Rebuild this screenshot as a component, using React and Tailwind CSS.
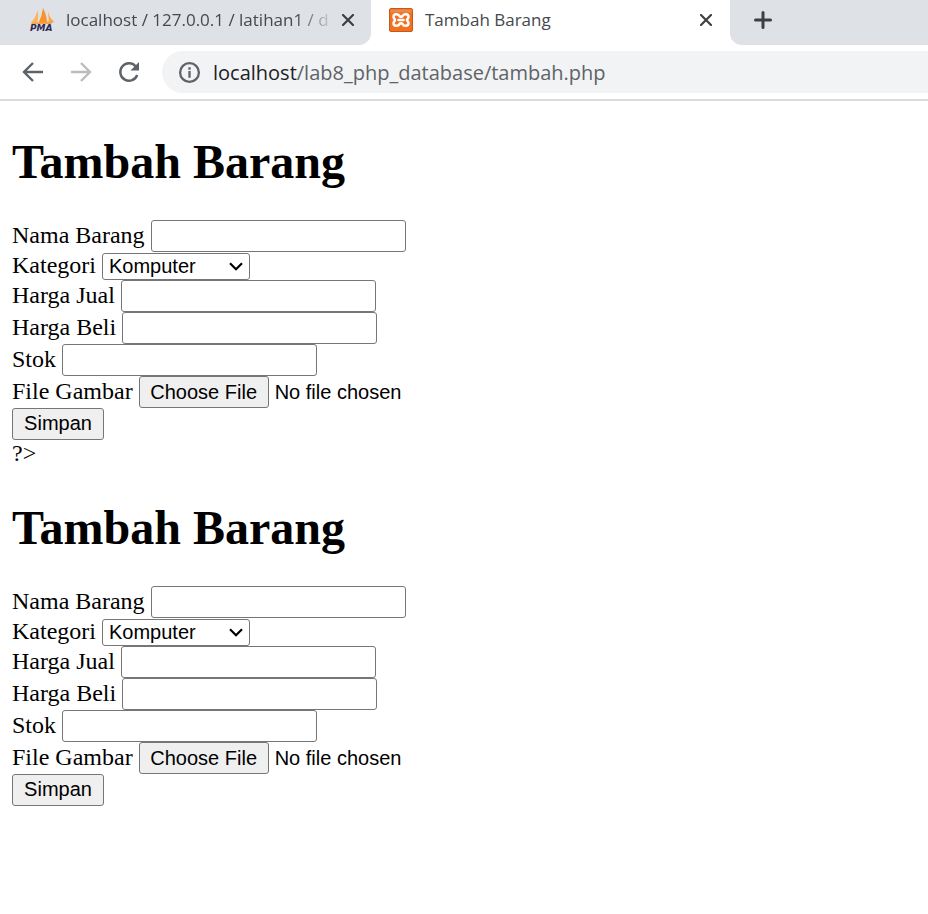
import React from "react";

function PmaIcon() {
  return (
    <svg viewBox="0 0 26 26" className="h-[26px] w-[26px] shrink-0" aria-hidden="true">
      <path d="M9 3 Q9.500 10 8.500 16 L2 16 Q7 10 9 3Z" fill="#fbb35c" />
      <path d="M14 1 Q18 9 18 16 L9.500 16 Q13 9 14 1Z" fill="#f9922a" />
      <path d="M19 4 Q20 10 25 15 L20 16 Q19.500 10 19 4Z" fill="#fba84a" />
      <path d="M3 16 L25 14 L22 17 L2 17Z" fill="#f6a245" />
      <text x="1" y="24" className="fill-[#2c2a55] font-['DejaVu_Sans',sans-serif] text-[9px] font-bold italic">
        PMA
      </text>
    </svg>
  );
}

function XamppIcon() {
  return (
    <svg viewBox="0 0 24 24" className="h-6 w-6 shrink-0" aria-hidden="true">
      <rect x="0.500" y="0.500" width="23" height="23" rx="1.500" fill="#f37021" stroke="#c4591a" />
      <rect x="1.500" y="1.500" width="21" height="3" fill="#e98a4b" />
      <path
        d="M10.500 8 C9.500 5.500 4.500 5.300 4.500 8.700 C4.500 10.500 6 11 6 12 C6 13 4.500 13.500 4.500 15.300 C4.500 18.700 9.500 18.500 10.500 16 M13.500 8 C14.500 5.500 19.500 5.300 19.500 8.700 C19.500 10.500 18 11 18 12 C18 13 19.500 13.500 19.500 15.300 C19.500 18.700 14.500 18.500 13.500 16 M10.500 8 Q12 9.500 13.500 8 M10.500 16 Q12 14.500 13.500 16 M9.500 12 H14.500"
        fill="none"
        stroke="#fff"
        strokeWidth="2.500"
        strokeLinecap="round"
        strokeLinejoin="round"
      />
    </svg>
  );
}

function CloseButton({ label }) {
  return (
    <button type="button" aria-label={label} className="flex h-6 w-6 shrink-0 items-center justify-center text-[#3c4043]">
      <svg viewBox="0 0 12 12" className="h-3 w-3" fill="none" stroke="currentColor" strokeWidth="2.200" strokeLinecap="round">
        <path d="M1 1 L11 11 M11 1 L1 11" />
      </svg>
    </button>
  );
}

function TabStrip() {
  return (
    <div className="flex h-[45px] bg-white font-['Open_Sans','Noto_Sans',sans-serif] text-[17px] leading-6 text-[#45494d]">
      <div className="flex w-[371px] shrink-0 items-center rounded-br-xl bg-[#dee1e6] pr-[11px] pb-[5px] pl-[29px]">
        <PmaIcon />
        <span className="ml-[11px] grow whitespace-nowrap [mask-image:linear-gradient(to_right,black_85%,transparent)]">
          localhost / 127.0.0.1 / latihan1 / d
        </span>
        <CloseButton label="Close phpMyAdmin tab" />
      </div>
      <div className="flex w-[359px] shrink-0 items-center pr-3 pb-[5px] pl-[18px]">
        <XamppIcon />
        <span className="ml-3 grow">Tambah Barang</span>
        <CloseButton label="Close Tambah Barang tab" />
      </div>
      <div className="flex grow items-center rounded-bl-xl bg-[#dee1e6] pb-[5px] pl-[21px]">
        <button type="button" aria-label="New tab" className="flex h-6 w-6 items-center justify-center text-[#3c4043]">
          <svg viewBox="0 0 18 18" className="h-[18px] w-[18px]" fill="none" stroke="currentColor" strokeWidth="3" strokeLinecap="round">
            <path d="M9 1.500 V16.500 M1.500 9 H16.500" />
          </svg>
        </button>
      </div>
    </div>
  );
}

function Toolbar() {
  return (
    <div className="flex h-14 items-center border-b-2 border-[#dadcdb] pl-[21px]">
      <div className="flex gap-6 text-[#5f6368]">
        <button type="button" aria-label="Back">
          <svg viewBox="0 0 24 24" className="h-6 w-6" fill="none" stroke="currentColor" strokeWidth="2.400">
            <path d="M22 12 H3.500 M12 3 L3 12 L12 21" />
          </svg>
        </button>
        <button type="button" aria-label="Forward" className="text-[#babcbe]">
          <svg viewBox="0 0 24 24" className="h-6 w-6" fill="none" stroke="currentColor" strokeWidth="2.400">
            <path d="M2 12 H20.500 M12 3 L21 12 L12 21" />
          </svg>
        </button>
        <button type="button" aria-label="Reload">
          <svg viewBox="0 0 24 24" className="h-6 w-6" fill="none" stroke="currentColor" strokeWidth="2.400">
            <path d="M20.200 15 A8.700 8.700 0 1 1 18.500 6.200" />
            <path d="M22 2 V10.500 H13.500 Z" fill="currentColor" stroke="none" />
          </svg>
        </button>
      </div>
      <div className="ml-[21px] flex h-[42px] grow items-center gap-3 rounded-l-full bg-[#f1f3f4] pl-4">
        <svg viewBox="0 0 24 24" className="h-[23px] w-[23px] shrink-0 text-[#5f6368]" fill="none" stroke="currentColor" strokeWidth="2.400" aria-hidden="true">
          <circle cx="12" cy="12" r="9.800" />
          <path d="M12 10.500 V17.500 M12 6.500 V9" />
        </svg>
        <span className="pt-0.5 font-['Open_Sans','Noto_Sans',sans-serif] text-[20px] leading-7 whitespace-nowrap text-[#5f6368]">
          <span className="text-[#202124]">localhost</span>/lab8_php_database/tambah.php
        </span>
      </div>
    </div>
  );
}

function TextField({ id, label }) {
  return (
    <div className="flex items-start gap-[6px]">
      <label htmlFor={id}>{label}</label>
      <input
        id={id}
        type="text"
        className="h-8 w-[255px] rounded-[3px] border border-[#767676] bg-white px-1 font-['Liberation_Sans',Arial,sans-serif] text-[20px]"
      />
    </div>
  );
}

function ItemForm({ prefix }) {
  return (
    <section>
      <h1 className="mb-[30px] pt-[33px] text-[48px] leading-[56px] font-bold">Tambah Barang</h1>
      <form className="leading-[30px]" onSubmit={(e) => e.preventDefault()}>
        <TextField id={`${prefix}-nama`} label="Nama Barang" />
        <div className="flex h-7 items-start gap-[6px] leading-[26px]">
          <label htmlFor={`${prefix}-kategori`}>Kategori</label>
          <div className="relative mt-px">
            <select
              id={`${prefix}-kategori`}
              className="block h-[27px] w-[148px] appearance-none rounded-[3px] border border-[#767676] bg-white pb-0.5 pl-[6px] font-['Liberation_Sans',Arial,sans-serif] text-[20px] leading-6"
            >
              <option>Komputer</option>
              <option>Elektronik</option>
              <option>Hand Phone</option>
            </select>
            <svg viewBox="0 0 14 9" className="pointer-events-none absolute top-[9px] right-[7px] h-[9px] w-[14px]" fill="none" stroke="black" strokeWidth="2.200" aria-hidden="true">
              <path d="M1 1.200 L7 7.200 L13 1.200" />
            </svg>
          </div>
        </div>
        <TextField id={`${prefix}-jual`} label="Harga Jual" />
        <TextField id={`${prefix}-beli`} label="Harga Beli" />
        <TextField id={`${prefix}-stok`} label="Stok" />
        <div className="flex items-start gap-[6px]">
          <label htmlFor={`${prefix}-file`}>File Gambar</label>
          <input
            id={`${prefix}-file`}
            type="file"
            className="h-8 w-[300px] font-['Liberation_Sans',Arial,sans-serif] text-[20px] leading-8 file:mr-[6px] file:h-8 file:w-[130px] file:rounded-[3px] file:border file:border-solid file:border-[#767676] file:bg-[#efefef] file:p-0 file:text-center file:leading-7"
          />
        </div>
        <button
          type="submit"
          className="block h-8 w-[92px] rounded-[3px] border border-[#767676] bg-[#efefef] pb-0.5 font-['Liberation_Sans',Arial,sans-serif] text-[20px] leading-7"
        >
          Simpan
        </button>
      </form>
    </section>
  );
}

export default function App() {
  return (
    <div className="min-h-screen overflow-hidden bg-white text-black">
      <TabStrip />
      <Toolbar />
      <main className="px-3 font-['Liberation_Serif','Times_New_Roman',serif] text-[24px]">
        <ItemForm prefix="first" />
        <p className="pb-px leading-[26px]">?&gt;</p>
        <ItemForm prefix="second" />
      </main>
    </div>
  );
}
